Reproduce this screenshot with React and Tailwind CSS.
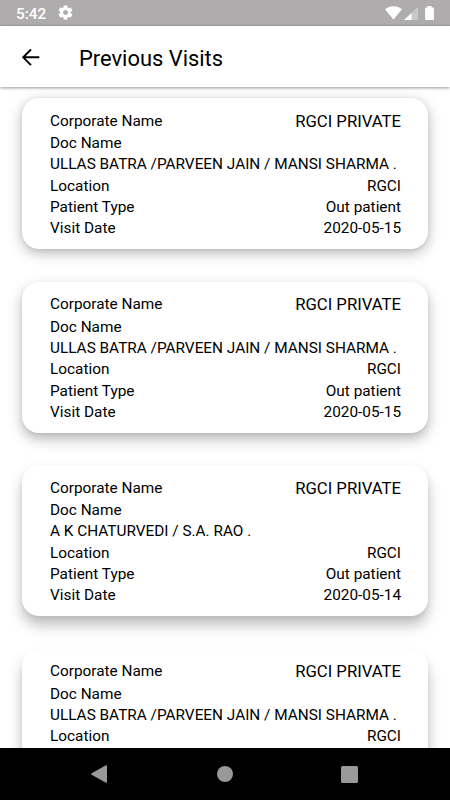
import React from 'react';

const ALL_DOCTORS = 'ULLAS BATRA /PARVEEN JAIN / MANSI SHARMA .';

const visits = [
  { id: 1, corporate: 'RGCI PRIVATE', doctor: ALL_DOCTORS, location: 'RGCI', type: 'Out patient', date: '2020-05-15' },
  { id: 2, corporate: 'RGCI PRIVATE', doctor: ALL_DOCTORS, location: 'RGCI', type: 'Out patient', date: '2020-05-15' },
  { id: 3, corporate: 'RGCI PRIVATE', doctor: 'A K CHATURVEDI / S.A. RAO .', location: 'RGCI', type: 'Out patient', date: '2020-05-14' },
  { id: 4, corporate: 'RGCI PRIVATE', doctor: ALL_DOCTORS, location: 'RGCI', type: 'Out patient', date: '2020-05-14' },
];

// Elevation shadows get longer for cards further down the screen
const shadows = [
  'shadow-[0_4px_14px_rgba(0,0,0,0.28),0_1px_4px_rgba(0,0,0,0.08)]',
  'shadow-[0_6px_14px_rgba(0,0,0,0.28),0_2px_4px_rgba(0,0,0,0.06)]',
  'shadow-[0_9px_14px_rgba(0,0,0,0.26),0_2px_4px_rgba(0,0,0,0.05)]',
  'shadow-[0_11px_14px_rgba(0,0,0,0.26),0_2px_4px_rgba(0,0,0,0.05)]',
];

const App = () => {
  return (
    <div className="h-[800px] w-[450px] flex flex-col overflow-hidden bg-white text-black font-[Roboto,sans-serif]">
      <StatusBar />

      {/* Header */}
      <header className="relative z-10 h-[61px] shrink-0 flex items-center bg-white pl-[19px] shadow-[0_1px_3px_rgba(0,0,0,0.4)]">
        <svg className="w-6 h-6" viewBox="0 0 24 24" fill="none" stroke="currentColor" strokeWidth="1.9">
          <path d="M20.300 12.300H4.500M12 4.500L4.200 12.300l7.800 7.800" />
        </svg>
        <h1 className="ml-9 pt-1 text-[21.9px] leading-7">Previous Visits</h1>
      </header>

      {/* Visit list */}
      <main className="flex-1 min-h-0 overflow-y-auto [scrollbar-width:none] flex flex-col gap-[32.2px] px-[22px] pt-[11.2px]">
        {visits.map((visit, i) => (
          <VisitCard key={visit.id} visit={visit} shadow={shadows[i]} />
        ))}
      </main>

      <NavigationBar />
    </div>
  );
};

const VisitCard = ({ visit, shadow }) => (
  <section className={`shrink-0 h-[151.3px] rounded-[17px] bg-white pl-7 pr-[27px] pt-[12.6px] text-[15.35px] leading-[21.35px] ${shadow}`}>
    <div className="h-[22.3px] flex justify-between">
      <span>Corporate Name</span>
      <span className="text-[16.7px] leading-[22.5px]">{visit.corporate}</span>
    </div>
    <p>Doc Name</p>
    <p className="whitespace-nowrap">{visit.doctor}</p>
    <Row label="Location" value={visit.location} />
    <Row label="Patient Type" value={visit.type} />
    <Row label="Visit Date" value={visit.date} />
  </section>
);

const Row = ({ label, value }) => (
  <div className="flex justify-between">
    <span>{label}</span>
    <span>{value}</span>
  </div>
);

const StatusBar = () => (
  <div className="h-[26px] shrink-0 flex items-center justify-between bg-[#aeacad] pl-4 pr-4 text-white border-b border-[#a5a3a4]">
    <div className="flex items-center gap-[11px]">
      <span className="pt-[2px] text-[15.3px] leading-5 font-medium">5:42</span>
      <svg className="w-[17px] h-[17px]" viewBox="0 0 24 24" fill="currentColor">
        <path d="M19.43 12.98c.04-.32.07-.64.07-.98s-.03-.66-.07-.98l2.11-1.65c.19-.15.24-.42.12-.64l-2-3.46c-.12-.22-.39-.3-.61-.22l-2.49 1c-.52-.4-1.08-.73-1.69-.98l-.38-2.65C14.46 2.18 14.25 2 14 2h-4c-.25 0-.46.18-.49.42l-.38 2.65c-.61.25-1.17.59-1.69.98l-2.49-1c-.23-.09-.49 0-.61.22l-2 3.46c-.13.22-.07.49.12.64l2.11 1.65c-.04.32-.07.65-.07.98s.03.66.07.98l-2.11 1.65c-.19.15-.24.42-.12.64l2 3.46c.12.22.39.3.61.22l2.49-1c.52.4 1.08.73 1.69.98l.38 2.65c.03.24.24.42.49.42h4c.25 0 .46-.18.49-.42l.38-2.65c.61-.25 1.17-.59 1.69-.98l2.49 1c.23.09.49 0 .61-.22l2-3.46c.12-.22.07-.49-.12-.64l-2.11-1.65zM12 15.5c-1.93 0-3.5-1.57-3.5-3.5s1.57-3.5 3.5-3.5 3.5 1.57 3.5 3.5-1.57 3.5-3.5 3.5z" />
      </svg>
    </div>
    <div className="flex items-center">
      <svg className="w-[17px] h-[14px]" viewBox="0 0 17 14" fill="currentColor">
        <path d="M0 3.2C2.4 1.2 5.3.2 8.5.2s6.100 1 8.500 3L8.500 13.500z" />
      </svg>
      <svg className="ml-[2px] w-[14px] h-[14px]" viewBox="0 0 14 14" fill="currentColor">
        <path d="M0 14L14 .8V14z" opacity=".35" />
        <path d="M0 14L7.500 7v7z" />
      </svg>
      <svg className="ml-[7px] w-[9px] h-[14px]" viewBox="0 0 9 14" fill="currentColor">
        <path d="M2.500 0h4v1.400h1.500a.9.9 0 0 1 .9.9v10.800a.9.9 0 0 1-.9.900H1a.9.9 0 0 1-.9-.9V2.300a.9.9 0 0 1 .9-.9h1.500z" />
      </svg>
    </div>
  </div>
);

const NavigationBar = () => (
  <nav className="relative z-10 h-[52px] shrink-0 flex items-center bg-black pl-[91px] text-[#999]">
    <svg className="w-4 h-[18px]" viewBox="0 0 16 18" fill="currentColor">
      <path d="M15 .3a.7.7 0 0 1 1 .6v16.200a.7.7 0 0 1-1 .6L.6 9.700a.8.8 0 0 1 0-1.400z" />
    </svg>
    <span className="ml-[110px] w-4 h-4 rounded-full bg-current" />
    <span className="ml-[108px] w-[17px] h-[17px] rounded-[1.5px] bg-current" />
  </nav>
);

export default App;
